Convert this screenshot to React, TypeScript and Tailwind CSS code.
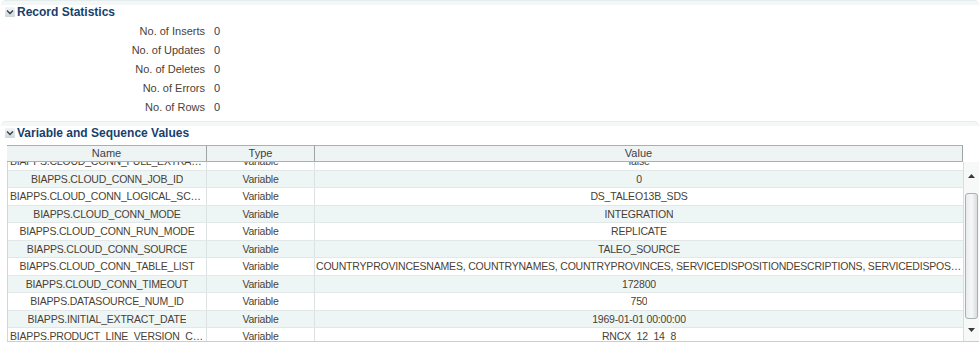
import React from "react";

type Row = { name: string; type: string; value: string };

const stats: { label: string; value: string }[] = [
  { label: "No. of Inserts", value: "0" },
  { label: "No. of Updates", value: "0" },
  { label: "No. of Deletes", value: "0" },
  { label: "No. of Errors", value: "0" },
  { label: "No. of Rows", value: "0" },
];

const rows: Row[] = [
  { name: "BIAPPS.CLOUD_CONN_FULL_EXTRACT", type: "Variable", value: "false" },
  { name: "BIAPPS.CLOUD_CONN_JOB_ID", type: "Variable", value: "0" },
  { name: "BIAPPS.CLOUD_CONN_LOGICAL_SCHEMA_NAME", type: "Variable", value: "DS_TALEO13B_SDS" },
  { name: "BIAPPS.CLOUD_CONN_MODE", type: "Variable", value: "INTEGRATION" },
  { name: "BIAPPS.CLOUD_CONN_RUN_MODE", type: "Variable", value: "REPLICATE" },
  { name: "BIAPPS.CLOUD_CONN_SOURCE", type: "Variable", value: "TALEO_SOURCE" },
  {
    name: "BIAPPS.CLOUD_CONN_TABLE_LIST",
    type: "Variable",
    value:
      "COUNTRYPROVINCESNAMES, COUNTRYNAMES, COUNTRYPROVINCES, SERVICEDISPOSITIONDESCRIPTIONS, SERVICEDISPOSITIONS, SERVICECATEGORIES",
  },
  { name: "BIAPPS.CLOUD_CONN_TIMEOUT", type: "Variable", value: "172800" },
  { name: "BIAPPS.DATASOURCE_NUM_ID", type: "Variable", value: "750" },
  { name: "BIAPPS.INITIAL_EXTRACT_DATE", type: "Variable", value: "1969-01-01 00:00:00" },
  { name: "BIAPPS.PRODUCT_LINE_VERSION_CODE", type: "Variable", value: "RNCX_12_14_8" },
];

const Disclose = () => (
  <span className="mr-[2px] inline-flex h-[10px] w-[10px] items-center justify-center rounded-[1px] bg-gradient-to-b from-[#f4f6f6] to-[#cfd5d6]">
    <svg width="8" height="6" viewBox="0 0 8 6">
      <path d="M1 1.5 L4 4.5 L7 1.5" fill="none" stroke="#2b3d55" strokeWidth="1.3" />
    </svg>
  </span>
);

const SectionHeader = ({ title }: { title: string }) => (
  <>
    <div className="mx-[1px] h-[5px] rounded-t-[5px] border-t border-[#e4ecec] bg-[#f3f7f7]" />
    <div className="flex h-[14px] items-center pl-[5px] text-[12px] font-bold leading-none text-[#173f6d]">
      <Disclose />
      {title}
    </div>
  </>
);

const App = () => {
  return (
    <div className="h-[346px] w-[980px] overflow-hidden bg-white font-['Liberation_Sans',Arial,sans-serif]">
      <SectionHeader title="Record Statistics" />
      <div className="pt-[3px]">
        {stats.map((s) => (
          <div key={s.label} className="flex h-[19px] items-center text-[11px]">
            <span className="w-[206px] pr-[1px] text-right text-[#4d4136]">{s.label}</span>
            <span className="pl-[8px] text-[#24425a]">{s.value}</span>
          </div>
        ))}
      </div>
      <div className="h-[4px]" />
      <SectionHeader title="Variable and Sequence Values" />
      <div className="ml-[7px] mt-[5px] w-[972px]">
        <div className="flex h-[17px] w-[956px] border-y border-[#a9b0b2] bg-[#eef4f4] text-[11px] leading-none text-[#3a3f4a]">
          <div className="flex w-[200px] items-center justify-center border-r border-[#9ea4a6]">Name</div>
          <div className="flex w-[108px] items-center justify-center border-r border-[#9ea4a6]">Type</div>
          <div className="flex flex-1 items-center justify-center border-r border-[#9ea4a6]">Value</div>
        </div>
        <div className="flex h-[180px] border-b border-[#c9cfd0]">
          <div className="w-[956px] overflow-hidden border-l border-[#d2d8d9]">
            <div className="-mt-[9px]">
              {rows.map((r, i) => (
                <div
                  key={r.name}
                  className={`flex h-[17.5px] border-b border-[#e2e8e8] text-[10.5px] leading-[16px] tracking-[-0.2px] text-[#4a3f35] ${
                    i % 2 === 1 ? "bg-[#eef5f5]" : "bg-white"
                  }`}
                >
                  <div className="flex w-[199px] items-center justify-center overflow-hidden border-r border-[#dce2e2] px-[2px]">
                    <span className="truncate leading-[16px]">{r.name}</span>
                  </div>
                  <div className="flex w-[108px] items-center justify-center border-r border-[#dce2e2]">{r.type}</div>
                  <div className="flex min-w-0 flex-1 items-center justify-center px-[1px]">
                    <span className="truncate leading-[16px]">{r.value}</span>
                  </div>
                </div>
              ))}
            </div>
          </div>
          <div className="flex w-[16px] flex-col items-center border-l border-[#d8dede] bg-[#f7f9f9]">
            <div className="flex h-[17px] w-full items-end justify-center pb-[1px]">
              <svg width="7" height="4" viewBox="0 0 7 4">
                <path d="M0 4 L3.5 0 L7 4 Z" fill="#3a3a3a" />
              </svg>
            </div>
            <div className="mt-[14px] h-[126px] w-[13px] rounded-[3px] border border-[#aab1b3] bg-gradient-to-r from-[#e9eced] via-[#f6f7f7] to-[#d9dddf]" />
            <div className="flex flex-1 items-center justify-center">
              <svg width="7" height="4" viewBox="0 0 7 4">
                <path d="M0 0 L3.5 4 L7 0 Z" fill="#3a3a3a" />
              </svg>
            </div>
          </div>
        </div>
      </div>
    </div>
  );
};

export default App;
